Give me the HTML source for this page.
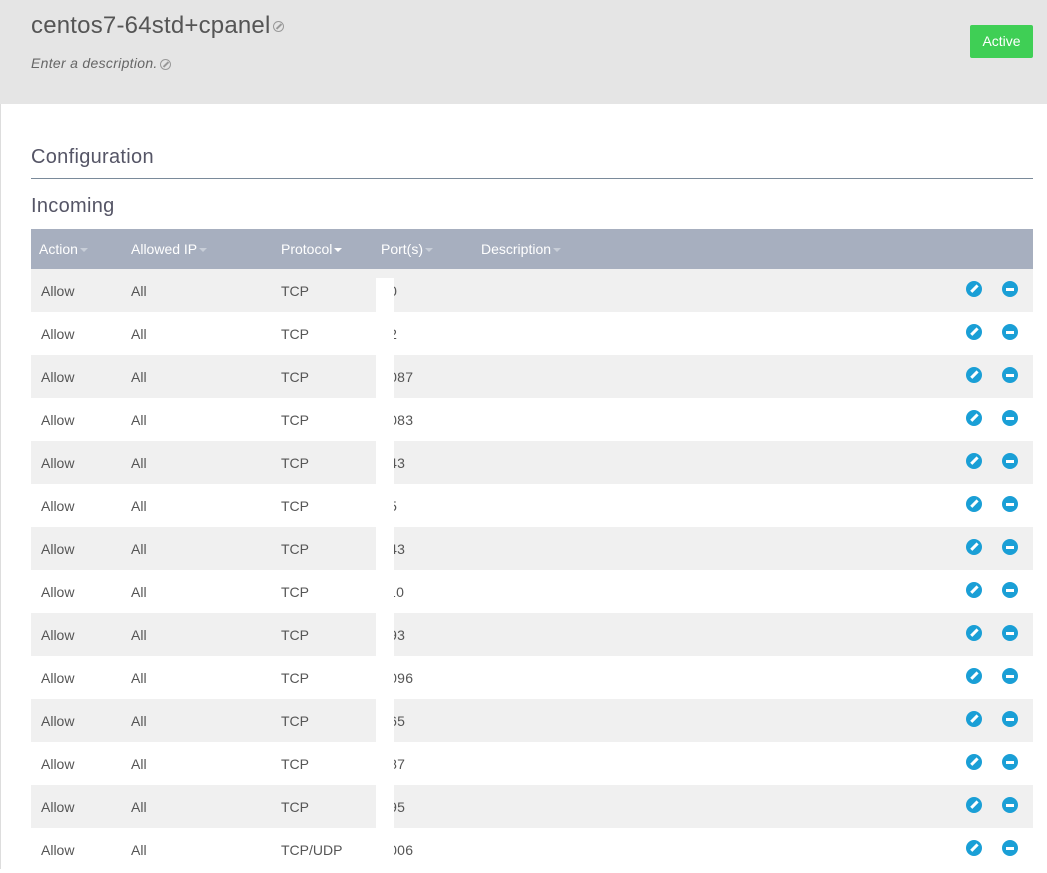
<!DOCTYPE html>
<html><head><style>
*{margin:0;padding:0;box-sizing:border-box}
body{width:1047px;height:869px;overflow:hidden;background:#fff;font-family:"Liberation Sans",sans-serif;color:#555;position:relative}
.top{position:absolute;left:0;top:0;width:1047px;height:104px;background:#e5e5e5}
.title{position:absolute;left:31px;top:12px;font-size:24px;color:#555;letter-spacing:0.2px}
.desc{position:absolute;left:31px;top:55px;font-size:14px;font-style:italic;color:#666;letter-spacing:0.3px}
.ico{display:inline-block;width:11px;height:11px;border:1px solid #999;border-radius:50%;vertical-align:middle;margin-left:2px;position:relative}
.ico:after{content:"";position:absolute;left:4px;top:1px;width:2px;height:7px;background:#999;transform:rotate(45deg)}
.btn{position:absolute;left:970px;top:25px;width:63px;height:33px;background:#3fcf55;color:#fff;font-size:14px;text-align:center;line-height:33px;border-radius:2px}
.lb{position:absolute;left:0;top:104px;width:1px;height:765px;background:#ddd}
h2{position:absolute;left:31px;top:146px;font-size:20px;font-weight:normal;color:#556;letter-spacing:0.3px}
.hr{position:absolute;left:31px;top:178px;width:1002px;height:1px;background:#7a8a9a}
h3{position:absolute;left:31px;top:195px;font-size:20px;font-weight:normal;color:#556;letter-spacing:0.3px}
.th{position:absolute;left:31px;top:229px;width:1002px;height:40px;background:#a7afbf;color:#fff;font-size:14px}
.th span,.r span{position:absolute;top:0}
.th span{line-height:40px}
.car{display:inline-block;border:4px solid transparent;border-top-color:#c8ced8;border-bottom:0;margin-left:2px;vertical-align:middle}
.r{position:absolute;left:31px;width:1002px;height:43px;font-size:14px;line-height:45px;color:#555}
.e{position:absolute;left:935px;top:12px;width:16px;height:16px;border-radius:50%;background:#1a9fd6}
.e:after{content:"";position:absolute;left:7px;top:3px;width:2.5px;height:9px;background:#fff;transform:rotate(45deg)}
.m{position:absolute;left:971px;top:12px;width:16px;height:16px;border-radius:50%;background:#1a9fd6}
.m:after{content:"";position:absolute;left:4px;top:7px;width:8px;height:2.5px;background:#fff}
.mask{position:absolute;left:376px;top:278px;width:18px;height:591px;background:#fff}
</style></head><body>
<div class="top"></div>
<div class="title">centos7-64std+cpanel<span class="ico"></span></div>
<div class="desc">Enter a description.<span class="ico"></span></div>
<div class="btn">Active</div>
<div class="lb"></div>
<h2>Configuration</h2>
<div class="hr"></div>
<h3>Incoming</h3>
<div class="th">
<span style="left:8px">Action<i class="car"></i></span>
<span style="left:100px">Allowed IP<i class="car"></i></span>
<span style="left:250px">Protocol<i class="car" style="border-top-color:#fff"></i></span>
<span style="left:350px">Port(s)<i class="car"></i></span>
<span style="left:450px">Description<i class="car"></i></span>
</div>
<div id="rows"></div>
<script>
var p=["80","22","2087","2083","443","25","143","110","993","2096","465","587","995","2006"];
var h="";
for(var i=0;i<14;i++){
h+='<div class="r" style="top:'+(269+i*43)+'px;background:'+(i%2==0?'#f0f0f0':'#fff')+'"><span style="left:10px">Allow</span><span style="left:100px">All</span><span style="left:250px">'+(i==13?'TCP/UDP':'TCP')+'</span><span style="left:350px;letter-spacing:0.3px">'+p[i]+'</span><i class="e"></i><i class="m"></i></div>';
}
document.getElementById("rows").innerHTML=h;
</script>
<div class="mask"></div>
</body></html>
